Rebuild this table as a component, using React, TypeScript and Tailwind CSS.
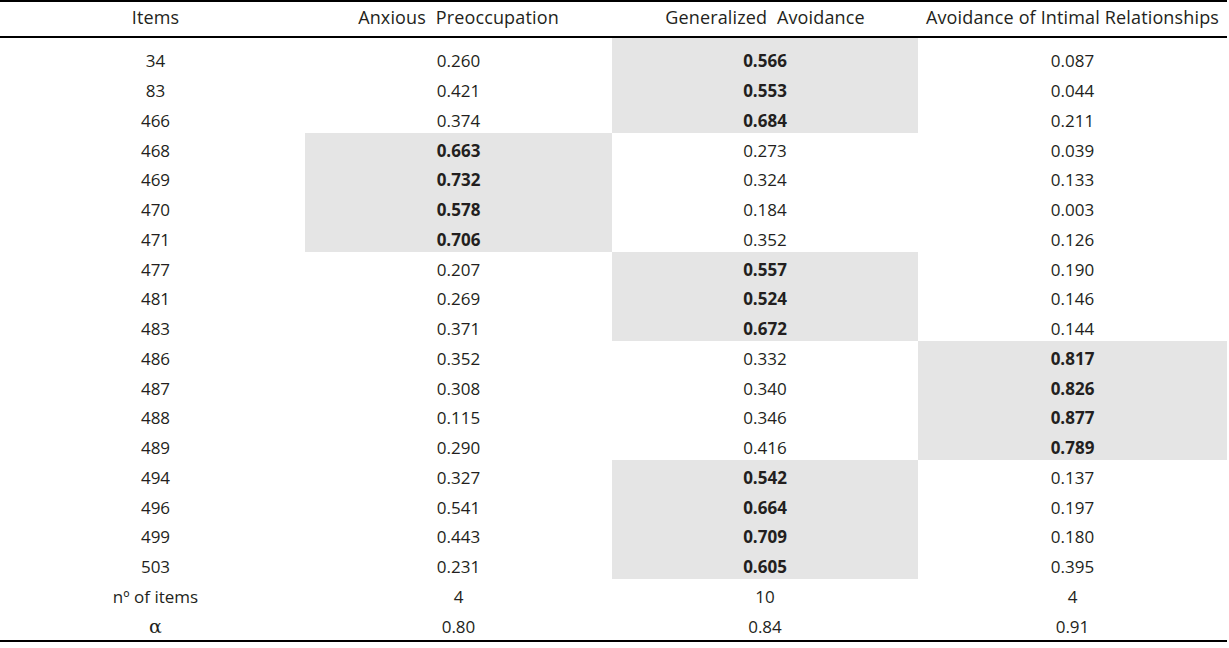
import React from 'react';

type Row = { item: string; a: string; g: string; r: string; hi?: 'a' | 'g' | 'r' };

const rows: Row[] = [
  { item: '34', a: '0.260', g: '0.566', r: '0.087', hi: 'g' },
  { item: '83', a: '0.421', g: '0.553', r: '0.044', hi: 'g' },
  { item: '466', a: '0.374', g: '0.684', r: '0.211', hi: 'g' },
  { item: '468', a: '0.663', g: '0.273', r: '0.039', hi: 'a' },
  { item: '469', a: '0.732', g: '0.324', r: '0.133', hi: 'a' },
  { item: '470', a: '0.578', g: '0.184', r: '0.003', hi: 'a' },
  { item: '471', a: '0.706', g: '0.352', r: '0.126', hi: 'a' },
  { item: '477', a: '0.207', g: '0.557', r: '0.190', hi: 'g' },
  { item: '481', a: '0.269', g: '0.524', r: '0.146', hi: 'g' },
  { item: '483', a: '0.371', g: '0.672', r: '0.144', hi: 'g' },
  { item: '486', a: '0.352', g: '0.332', r: '0.817', hi: 'r' },
  { item: '487', a: '0.308', g: '0.340', r: '0.826', hi: 'r' },
  { item: '488', a: '0.115', g: '0.346', r: '0.877', hi: 'r' },
  { item: '489', a: '0.290', g: '0.416', r: '0.789', hi: 'r' },
  { item: '494', a: '0.327', g: '0.542', r: '0.137', hi: 'g' },
  { item: '496', a: '0.541', g: '0.664', r: '0.197', hi: 'g' },
  { item: '499', a: '0.443', g: '0.709', r: '0.180', hi: 'g' },
  { item: '503', a: '0.231', g: '0.605', r: '0.395', hi: 'g' },
  { item: 'nº of items', a: '4', g: '10', r: '4' },
  { item: 'α', a: '0.80', g: '0.84', r: '0.91' },
];

// plain cell vs. highlighted loading; first row carries the extra top gap
function Cell({ value, on, first }: { value: string; on: boolean; first: boolean }) {
  return (
    <div
      className={`flex items-center justify-center ${
        first ? 'h-[35px] pt-[11px]' : 'h-[29.75px] pt-[6px]'
      } ${on ? 'bg-[#e5e5e5] font-bold' : ''}`}
    >
      {value}
    </div>
  );
}

export default function App() {
  return (
    <div
      className="w-[1229px] h-[648px] bg-white text-[#231f20] text-[17px]"
      style={{ fontFamily: '"Open Sans", "Noto Sans", sans-serif' }}
    >
      <div className="w-[1227px] border-t-2 border-b-2 border-black">
        {/* header */}
        <div className="grid grid-cols-[305px_307px_306px_1fr] h-[36px] items-center border-b-2 border-black text-[18px] tracking-[0.15px] pb-[3px]">
          <div className="text-center pl-[6px]">Items</div>
          <div className="text-center">Anxious&nbsp; Preoccupation</div>
          <div className="text-center">Generalized&nbsp; Avoidance</div>
          <div className="text-center">Avoidance of Intimal Relationships</div>
        </div>

        {/* body */}
        <div className="pb-[2px]">
          {rows.map((row, i) => (
            <div key={row.item} className="grid grid-cols-[305px_307px_306px_1fr]">
              <div
                className={`flex items-center justify-center pl-[6px] ${
                  i === 0 ? 'h-[35px] pt-[11px]' : 'h-[29.75px] pt-[6px]'
                }`}
              >
                {row.item === 'α' ? (
                  <span className="text-[19px]" style={{ fontFamily: '"DejaVu Serif", serif' }}>
                    α
                  </span>
                ) : (
                  row.item
                )}
              </div>
              <Cell value={row.a} on={row.hi === 'a'} first={i === 0} />
              <Cell value={row.g} on={row.hi === 'g'} first={i === 0} />
              <Cell value={row.r} on={row.hi === 'r'} first={i === 0} />
            </div>
          ))}
        </div>
      </div>
    </div>
  );
}
